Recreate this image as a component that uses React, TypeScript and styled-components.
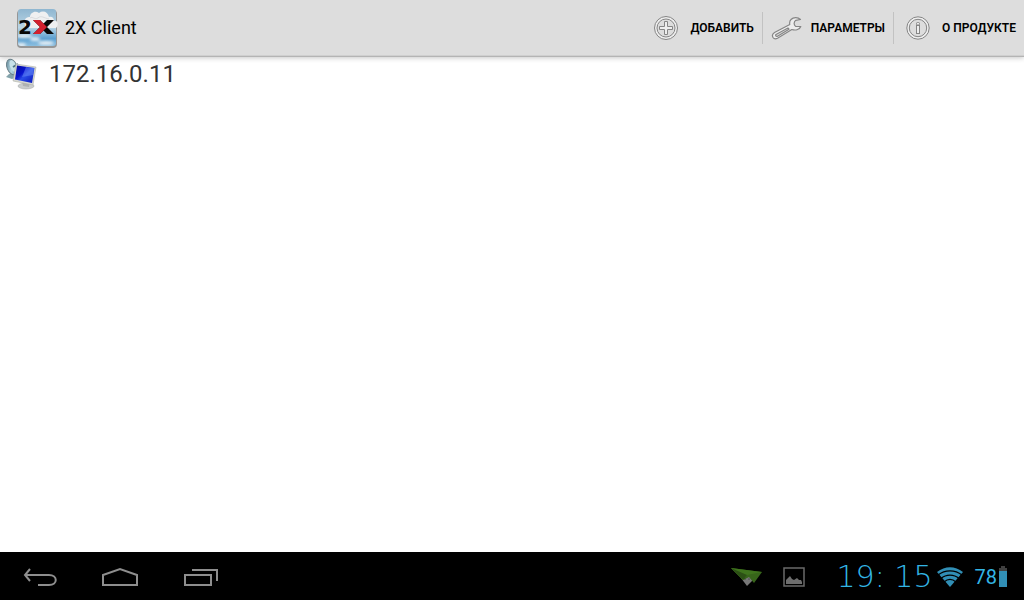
import React from 'react';
import styled, { createGlobalStyle } from 'styled-components';

const GlobalStyle = createGlobalStyle`
  * { box-sizing: border-box; }
  body { margin: 0; background: #fff; font-family: Roboto, "Noto Sans", sans-serif; }
  svg { display: block; flex: none; }
`;

const Screen = styled.div`
  display: flex;
  flex-direction: column;
  min-height: 100vh;
`;

const ActionBar = styled.header`
  display: flex;
  align-items: center;
  justify-content: space-between;
  height: 57px;
  padding: 0 0 0 16px;
  background: #ddd;
  border-bottom: 1px solid #b4b4b4;
  box-shadow: inset 0 -1px 0 #cfcfcf, 0 1px 5px rgba(0, 0, 0, 0.22);
`;

const Brand = styled.div`
  display: flex;
  align-items: center;
  gap: 7px;
`;

const Title = styled.h1`
  margin: 0;
  font-size: 18px;
  line-height: 24px;
  font-weight: 400;
  color: #000;
`;

const Actions = styled.nav`
  display: flex;
  align-items: center;
`;

const ActionButton = styled.button`
  display: flex;
  align-items: center;
  gap: 8px;
  height: 32px;
  padding: 0 8px;
  border: 0;
  border-right: 1px solid #c2c2c2;
  background: none;
  font: 600 12px/16px Roboto, "Noto Sans", sans-serif;
  color: #000;
  white-space: nowrap;
  &:last-child { border-right: 0; }
`;

const Hosts = styled.ul`
  flex: 1;
  margin: 0;
  padding: 0;
  list-style: none;
`;

const HostLink = styled.a`
  display: flex;
  align-items: center;
  gap: 12px;
  height: 34px;
  padding: 0 4px;
  font-size: 24px;
  line-height: 32px;
  color: #333;
  text-decoration: none;
`;

const SystemBar = styled.footer`
  display: flex;
  align-items: center;
  justify-content: space-between;
  height: 48px;
  padding: 2px 17px 0 0;
  background: #000;
`;

const NavKeys = styled.div`
  display: flex;
`;

const NavKey = styled.button`
  display: flex;
  justify-content: center;
  width: 80px;
  padding: 0;
  border: 0;
  background: none;
`;

const Status = styled.div`
  display: flex;
  align-items: center;
  color: #33b5e5;
`;

const Notices = styled.div`
  display: flex;
  align-items: center;
  gap: 20px;
  margin-right: 32px;
`;

const Clock = styled.time`
  margin-right: 4px;
  font: 200 30px/32px "DejaVu Sans Light", "DejaVu Sans", sans-serif;
  white-space: nowrap;
`;

const Charge = styled.span`
  margin: 0 2px 0 12px;
  font-size: 20px;
  line-height: 24px;
`;

const LogoIcon = () => (
  <svg width="42" height="42" viewBox="0 0 42 42" role="img" aria-label="2X">
    <defs>
      <linearGradient id="sky" x1="0" y1="0" x2="0" y2="1">
        <stop offset="0" stopColor="#8fb6d0" />
        <stop offset="0.5" stopColor="#b9d5e5" />
        <stop offset="0.8" stopColor="#5b9fd0" />
        <stop offset="1" stopColor="#8cbfe0" />
      </linearGradient>
      <filter id="puff"><feGaussianBlur stdDeviation="1.5" /></filter>
      <clipPath id="tile"><rect x="2" y="2" width="38" height="37" rx="3" /></clipPath>
    </defs>
    <rect x="1" y="3" width="40" height="38" rx="4" fill="#777" opacity="0.7" />
    <rect x="2" y="2" width="38" height="37" rx="3" fill="url(#sky)" />
    <g clipPath="url(#tile)">
      <g filter="url(#puff)" fill="#e6eff5">
        <ellipse cx="8" cy="29" rx="8" ry="2" />
        <ellipse cx="30" cy="36" rx="8" ry="2" />
        <ellipse cx="19" cy="32" rx="5" ry="2" />
        <ellipse cx="5" cy="38" rx="5" ry="2" />
      </g>
    </g>
    <path d="M9 15C8 12 11 10 14 10C14 6 19 3 23 6C27 3 32 5 33 10C36 9 38 11 38 14C42 13 43 18 40 21L12 21C9 20 8 17 9 15Z" fill="#eff0f1" />
    <path d="M14 11C17 9 18 13 22 11C25 8 28 11 33 12" fill="none" stroke="#d8dbde" />
    <text x="2" y="27" fontFamily="DejaVu Sans" fontWeight="700" fontSize="20" fill="#080808">2</text>
    <path d="M17 13H24L38 27H31ZM31 13H38L24 27H17Z" fill="#080808" />
    <path d="M17 13H24L31 20L24 27H17L24 20Z" fill="#d3202e" />
  </svg>
);

const AddIcon = () => (
  <svg width="32" height="32" viewBox="0 0 32 32" fill="#eee" stroke="#858585" strokeWidth="1">
    <circle cx="16" cy="16" r="11.5" />
    <circle cx="16" cy="16" r="9" fill="#ddd" />
    <path d="M14.5 9.5H17.5V14.5H22.5V17.5H17.5V22.5H14.5V17.5H9.5V14.5H14.5Z" />
  </svg>
);

const WrenchIcon = () => (
  <svg width="32" height="32" viewBox="0 0 32 32" fill="#eee" stroke="#858585" strokeWidth="1.2" strokeLinejoin="round">
    <path d="M29.5 7.5C27 5 22.5 4.8 20 7.5C18.5 9 18.5 11 18.8 12.5L3.5 20.5C1.5 21.8 1 23.8 2 25.5C3 27 5 27 6.5 26.300L20.8 17.5C24 18.5 28.5 18.2 29.8 14.5L24.5 14.3C22.5 13 22.8 9.5 24.8 8.3Z" />
    <path d="M5 22.5L17 16L18 17.2L6.5 24.3C5 24.9 4 23.4 5 22.5Z" fill="#ddd" />
  </svg>
);

const InfoIcon = () => (
  <svg width="32" height="32" viewBox="0 0 32 32" fill="#eee" stroke="#858585" strokeWidth="1">
    <circle cx="16" cy="16" r="11.2" />
    <circle cx="16" cy="16" r="8.7" fill="#ddd" />
    <rect x="14.5" y="10.5" width="3" height="2.5" rx="1" />
    <rect x="14.5" y="13.5" width="3" height="8" />
  </svg>
);

const HostIcon = () => (
  <svg width="33" height="34" viewBox="0 0 33 34">
    <defs>
      <linearGradient id="screen" x1="0" y1="0" x2="1" y2="1">
        <stop offset="0" stopColor="#060c9c" />
        <stop offset="0.4" stopColor="#0714cf" />
        <stop offset="0.55" stopColor="#2a4ee8" />
        <stop offset="1" stopColor="#0713b8" />
      </linearGradient>
      <linearGradient id="dish" x1="0" y1="0" x2="1" y2="1">
        <stop offset="0" stopColor="#54798a" />
        <stop offset="0.5" stopColor="#b4d6e1" />
        <stop offset="1" stopColor="#608b9b" />
      </linearGradient>
    </defs>
    <path d="M5 17L2 20L8 22L13 20L10 15Z" fill="#84a3ab" />
    <ellipse cx="8" cy="10" rx="5" ry="8" transform="rotate(-22 8 10)" fill="url(#dish)" stroke="#69818a" />
    <ellipse cx="9" cy="9" rx="3" ry="6" transform="rotate(-22 9 9)" fill="#c7e1e9" />
    <path d="M9 10L14 7" stroke="#4b7385" strokeWidth="2" />
    <ellipse cx="22" cy="29" rx="8" ry="3" fill="#c9cccc" stroke="#a0a4a5" strokeWidth="0.5" />
    <path d="M18 24L26 25L25 30L19 29Z" fill="#aeb1b2" />
    <path d="M12 7L32 10L29 28L9 24Z" fill="#d6d8d2" stroke="#a6a99f" strokeWidth="0.5" />
    <path d="M13 8.5L30.500 11L28 26L11 22.5Z" fill="url(#screen)" />
    <path d="M22 10L30 11L29 18L18 20Z" fill="#6b8df7" opacity="0.5" />
  </svg>
);

const BackIcon = () => (
  <svg width="36" height="20" viewBox="0 0 36 20" fill="none" stroke="#8e8e8e" strokeWidth="2">
    <path d="M3 8H27C36 8 36 18 27 18H16M8 2L3 8L8 14" />
  </svg>
);

const HomeIcon = () => (
  <svg width="38" height="20" viewBox="0 0 38 20" fill="none" stroke="#8e8e8e" strokeWidth="2">
    <path d="M2 18V8L19 2L36 8V18Z" />
  </svg>
);

const RecentIcon = () => (
  <svg width="36" height="20" viewBox="0 0 36 20" fill="none" stroke="#8e8e8e" strokeWidth="2">
    <path d="M3 8H29V18H3ZM10 3H35V14" />
  </svg>
);

const PlaneIcon = () => (
  <svg width="32" height="22" viewBox="0 0 32 22">
    <path d="M10 12L16 20L22 14L19 9Z" fill="#777" />
    <path d="M0 2L31 6L23 17L18 11L12 14Z" fill="#37651a" />
    <path d="M0 2L31 6L16 9L12 14Z" fill="#3f741d" />
    <path d="M0 2L12 14L16 9Z" fill="#2c5015" />
    <circle cx="14" cy="13" r="0.6" fill="#222" />
    <circle cx="18" cy="13" r="0.6" fill="#222" />
  </svg>
);

const PictureIcon = () => (
  <svg width="22" height="20" viewBox="0 0 22 20">
    <rect x="1" y="1" width="20" height="18" fill="none" stroke="#6a6a6a" strokeWidth="1.5" />
    <path d="M3 17V13L7 9L9 12L11 13L14 11L16 13H18L19 15V17Z" fill="#6e6e6e" />
  </svg>
);

const WifiIcon = () => (
  <svg width="26" height="20" viewBox="0 0 26 20">
    <path d="M0 5C8 -1.5 18 -1.5 26 5L13 20Z" fill="#318fb6" />
    <path d="M1 8C8 2.5 18 2.5 25 8M4 11.5C9 7 17 7 22 11.5M7 15C11 11.500 15 11.5 19 15" fill="none" stroke="#000" strokeWidth="1.3" />
  </svg>
);

const BatteryIcon = () => (
  <svg width="8" height="22" viewBox="0 0 8 22">
    <path d="M2 0H6V2H8V6H0V2H2Z" fill="#404040" />
    <rect y="5" width="8" height="16" fill="#318fb6" />
  </svg>
);

const actions = [
  { label: 'ДОБАВИТЬ', Icon: AddIcon },
  { label: 'ПАРАМЕТРЫ', Icon: WrenchIcon },
  { label: 'О ПРОДУКТЕ', Icon: InfoIcon },
];

const navKeys = [
  { label: 'Назад', Icon: BackIcon },
  { label: 'Домой', Icon: HomeIcon },
  { label: 'Недавние', Icon: RecentIcon },
];

export default function App() {
  return (
    <Screen>
      <GlobalStyle />
      <ActionBar>
        <Brand>
          <LogoIcon />
          <Title>2X Client</Title>
        </Brand>
        <Actions>
          {actions.map(({ label, Icon }) => (
            <ActionButton key={label} type="button"><Icon />{label}</ActionButton>
          ))}
        </Actions>
      </ActionBar>
      <Hosts>
        <li><HostLink href="#host"><HostIcon />172.16.0.11</HostLink></li>
      </Hosts>
      <SystemBar>
        <NavKeys>
          {navKeys.map(({ label, Icon }) => (
            <NavKey key={label} type="button" aria-label={label}><Icon /></NavKey>
          ))}
        </NavKeys>
        <Status>
          <Notices><PlaneIcon /><PictureIcon /></Notices>
          <Clock>19: 15</Clock>
          <WifiIcon />
          <Charge>78</Charge>
          <BatteryIcon />
        </Status>
      </SystemBar>
    </Screen>
  );
}
